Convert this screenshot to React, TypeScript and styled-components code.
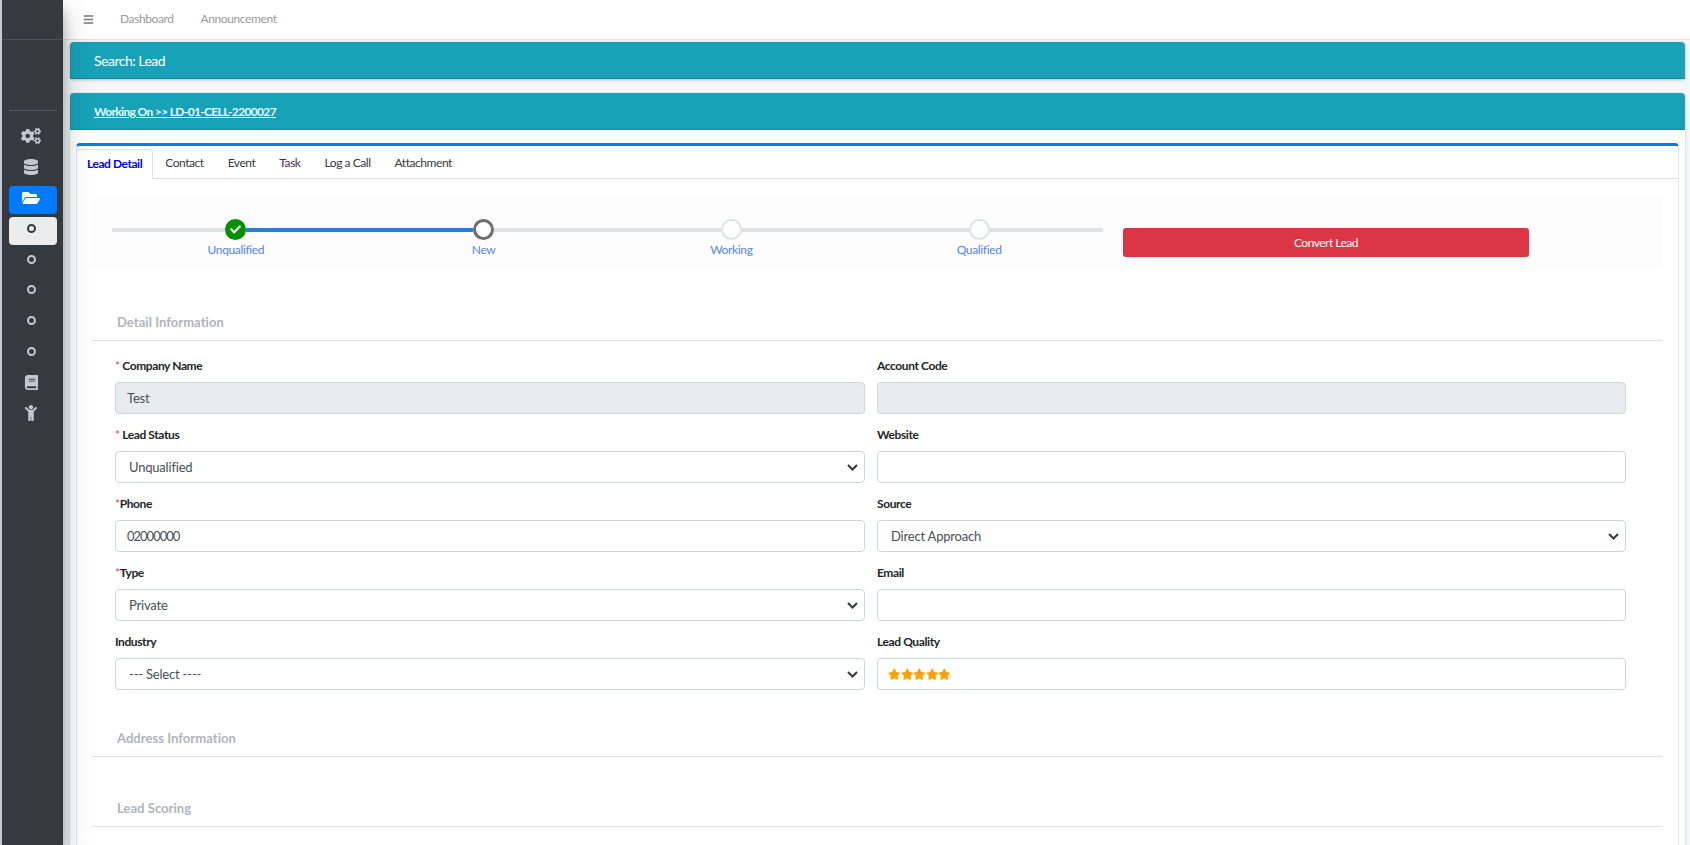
import React from "react";
import styled, {createGlobalStyle} from "styled-components";
import {FaBars, FaBook, FaCheck, FaChild, FaCogs, FaDatabase, FaFolderOpen, FaStar} from "react-icons/fa";

const GlobalStyle = createGlobalStyle`
    html, body {
        margin: 0;
        padding: 0;
        height: 100%;
        overflow: hidden;
    }
    * {
        box-sizing: border-box;
    }
    body {
        font-family: Lato, "Noto Sans", sans-serif;
        font-size: 13px;
        color: #212529;
    }
`;

const Page = styled.div`
    display: flex;
    width: 1690px;
    height: 845px;
    overflow: hidden;
    background: #f4f6f9;
`;

const Sidebar = styled.aside`
    position: relative;
    z-index: 2;
    flex: 0 0 63px;
    border-left: 2px solid #c6cbd3;
    background: #343a40;
    box-shadow: 0 14px 28px rgba(0, 0, 0, 0.25), 0 10px 10px rgba(0, 0, 0, 0.22);
`;

const Brand = styled.div`
    height: 40px;
    border-bottom: 1px solid #4b545c;
`;

const UserPanel = styled.div`
    height: 71px;
    margin: 0 6px 0 7px;
    border-bottom: 1px solid #4f5962;
`;

const SideNav = styled.nav`
    display: flex;
    flex-direction: column;
    gap: 2.8px;
    margin-top: 11px;
    padding: 0 6px 0 7px;
`;

const SideItem = styled.div<{ $tone?: "primary" | "light" }>`
    display: flex;
    align-items: center;
    height: 28px;
    padding-left: 12px;
    border-radius: 4px;
    color: ${p => p.$tone === "primary" ? "#ffffff" : p.$tone === "light" ? "#343a40" : "#c2c7d0"};
    background: ${p => p.$tone === "primary" ? "#007bff" : p.$tone === "light" ? "#ececec" : "transparent"};
    ${p => p.$tone ? "margin: 2.6px 0 -2.6px; padding-bottom: 5.2px;" : ""}
`;

const SideIcon = styled.span`
    display: flex;
    justify-content: center;
    width: 20px;
`;

const Ring = styled.span`
    display: block;
    width: 9px;
    height: 9px;
    border: 2.5px solid currentColor;
    border-radius: 50%;
`;

const Main = styled.main`
    flex: 1;
    min-width: 0;
`;

const Navbar = styled.header`
    display: flex;
    align-items: center;
    height: 40px;
    padding-left: 20px;
    background: #ffffff;
    border-bottom: 1px solid #dee2e6;
    color: #777777;
`;

const NavLinks = styled.div`
    display: flex;
    gap: 27px;
    margin: -2px 0 0 26px;
`;

const NavLink = styled.a`
    font-size: 12px;
    letter-spacing: -0.4px;
    color: #9a9a9a;
`;

const Content = styled.div`
    padding: 2px 5px 0 7px;
`;

const TealBar = styled.div`
    display: flex;
    align-items: center;
    height: 37px;
    padding-left: 24px;
    border-radius: 4px 4px 0 0;
    border-bottom: 1px solid #148a9d;
    background: #17a2b8;
    color: #ffffff;
`;

const SearchCard = styled.section`
    margin-bottom: 14px;
    border-radius: 4px;
    box-shadow: 0 1px 3px rgba(0, 0, 0, 0.25);
    font-size: 14px;
    letter-spacing: -0.5px;
`;

const WorkingCard = styled.section`
    border-radius: 4px 4px 0 0;
    background: #ffffff;
    box-shadow: 0 0 1px rgba(0, 0, 0, 0.2), 0 1px 3px rgba(0, 0, 0, 0.15);
`;

const WorkingLink = styled.a`
    font-size: 12px;
    font-weight: 700;
    letter-spacing: -0.65px;
    text-decoration: underline;
    color: #e8f7fa;
`;

const WorkingBody = styled.div`
    padding: 13px 6px 0;
    height: 716px;
`;

const TabCard = styled.div`
    height: 100%;
    border: 1px solid #e3e6ea;
    border-top: 3px solid #007bff;
    border-bottom: none;
    border-radius: 4px 4px 0 0;
    background: #ffffff;
`;

const TabRow = styled.div`
    display: flex;
    height: 33px;
    padding-top: 3px;
    border-bottom: 1px solid #dee2e6;
`;

const Tab = styled.div<{ $active?: boolean; $color?: string }>`
    display: flex;
    align-items: center;
    height: ${p => p.$active ? "30px" : "29px"};
    margin-left: ${p => p.$active ? "-1px" : "0"};
    padding: 0 ${p => p.$active ? "10px" : "12px"} 2px;
    font-size: 12px;
    font-weight: ${p => p.$active ? 700 : 400};
    letter-spacing: -0.45px;
    color: ${p => p.$active ? "#0000ee" : p.$color || "#343a40"};
    background: #ffffff;
    border: ${p => p.$active ? "1px solid #dee2e6" : "none"};
    border-bottom: none;
    border-radius: 4px 4px 0 0;
`;

const TabBody = styled.div`
    padding: 18px 16px 0 15px;
`;

const StepPanel = styled.div`
    display: flex;
    align-items: flex-start;
    height: 72px;
    padding: 22px 0 0 20px;
    background: #fcfcfd;
`;

const Stepper = styled.div`
    display: flex;
    width: 991px;
`;

const Step = styled.div`
    flex: 1;
    display: flex;
    flex-direction: column;
    align-items: center;
`;

const StepTrack = styled.div`
    display: flex;
    align-items: center;
    width: 100%;
`;

const Segment = styled.div<{ $done?: boolean }>`
    flex: 1;
    height: 4px;
    margin-top: 1px;
    background: ${p => p.$done ? "#2680d9" : "#e0e3e3"};
`;

const StepDot = styled.div<{ $state: "done" | "current" | "todo" }>`
    display: flex;
    align-items: center;
    justify-content: center;
    width: 21px;
    height: 21px;
    border-radius: 50%;
    color: #ffffff;
    background: ${p => p.$state === "done" ? "#009000" : "#ffffff"};
    border: ${p => p.$state === "done" ? "none" : p.$state === "current" ? "3px solid #6e6e6e" : "2px solid #dfe3e3"};
`;

const StepLabel = styled.div`
    margin-top: 2px;
    line-height: 16px;
    font-size: 12px;
    letter-spacing: -0.35px;
    color: #5585f0;
`;

const ConvertButton = styled.button`
    width: 406px;
    height: 29px;
    margin: 9px 0 0 20px;
    border: none;
    border-radius: 3px;
    background: #dc3545;
    color: #ffffff;
    font-family: inherit;
    font-size: 12px;
    letter-spacing: -0.5px;
`;

const SectionTitle = styled.h3<{ $top: number }>`
    margin: ${p => p.$top}px 0 0;
    padding: 0 0 8px 25px;
    line-height: 20px;
    font-size: 13px;
    font-weight: 700;
    letter-spacing: 0.05px;
    color: #adb5bd;
    border-bottom: 1px solid #dee2e6;
`;

const FormGrid = styled.div`
    display: grid;
    grid-template-columns: 750px 749px;
    column-gap: 12px;
    row-gap: 12px;
    padding: 16px 0 0 23px;
`;

const Field = styled.div`
    display: flex;
    flex-direction: column;
    gap: 7px;
`;

const Label = styled.label`
    line-height: 18px;
    font-size: 12px;
    font-weight: 700;
    letter-spacing: -0.4px;
    color: #212529;
`;

const Required = styled.span`
    color: #e0446a;
    font-weight: 400;
`;

const TextInput = styled.input<{ $tight?: boolean }>`
    height: 32px;
    padding: 0 11px;
    border: 1px solid #ced4da;
    border-radius: 4px;
    outline: none;
    font-family: inherit;
    font-size: 13px;
    letter-spacing: ${p => p.$tight ? "-1px" : "-0.2px"};
    color: #495057;
    background: ${p => p.disabled ? "#e9ecef" : "#ffffff"};
`;

const SelectInput = styled.select`
    appearance: none;
    height: 32px;
    padding: 0 24px 0 13px;
    border: 1px solid #ced4da;
    border-radius: 4px;
    outline: none;
    font-family: inherit;
    font-size: 13px;
    letter-spacing: -0.2px;
    color: #495057;
    background: #ffffff url("data:image/svg+xml,%3Csvg xmlns='http://www.w3.org/2000/svg' width='11' height='7' viewBox='0 0 11 7'%3E%3Cpath d='M1 1l4.5 4.5L10 1' fill='none' stroke='%23343a40' stroke-width='2'/%3E%3C/svg%3E") no-repeat right 6px center;
`;

const RatingBox = styled.div`
    display: flex;
    align-items: center;
    height: 32px;
    padding-left: 10px;
    border: 1px solid #ced4da;
    border-radius: 4px;
    color: #ffa000;
`;

function Star() {
    return <FaStar size={12.5}/>;
}

const STEPS = [
    {label: "Unqualified", state: "done"},
    {label: "New", state: "current"},
    {label: "Working", state: "todo"},
    {label: "Qualified", state: "todo"},
] as const;

const TABS = ["Contact", "Event", "Task", "Log a Call", "Attachment"];

function LeadStepper() {
    return (
        <StepPanel>
            <Stepper>
                {STEPS.map((step, i) => (
                    <Step key={step.label}>
                        <StepTrack>
                            <Segment $done={i === 1}/>
                            <StepDot $state={step.state}>
                                {step.state === "done" && <FaCheck size={11}/>}
                            </StepDot>
                            <Segment $done={i === 0}/>
                        </StepTrack>
                        <StepLabel>{step.label}</StepLabel>
                    </Step>
                ))}
            </Stepper>
            <ConvertButton>Convert Lead</ConvertButton>
        </StepPanel>
    );
}

function LeadForm() {
    return (
        <FormGrid>
            <Field>
                <Label><Required>*</Required> Company Name</Label>
                <TextInput disabled defaultValue="Test"/>
            </Field>
            <Field>
                <Label>Account Code</Label>
                <TextInput disabled/>
            </Field>
            <Field>
                <Label><Required>*</Required> Lead Status</Label>
                <SelectInput defaultValue="Unqualified">
                    <option>Unqualified</option>
                </SelectInput>
            </Field>
            <Field>
                <Label>Website</Label>
                <TextInput/>
            </Field>
            <Field>
                <Label><Required>*</Required>Phone</Label>
                <TextInput $tight defaultValue="02000000"/>
            </Field>
            <Field>
                <Label>Source</Label>
                <SelectInput defaultValue="Direct Approach">
                    <option>Direct Approach</option>
                </SelectInput>
            </Field>
            <Field>
                <Label><Required>*</Required>Type</Label>
                <SelectInput defaultValue="Private">
                    <option>Private</option>
                </SelectInput>
            </Field>
            <Field>
                <Label>Email</Label>
                <TextInput/>
            </Field>
            <Field>
                <Label>Industry</Label>
                <SelectInput defaultValue="--- Select ----">
                    <option>--- Select ----</option>
                </SelectInput>
            </Field>
            <Field>
                <Label>Lead Quality</Label>
                <RatingBox>
                    <Star/><Star/><Star/><Star/><Star/>
                </RatingBox>
            </Field>
        </FormGrid>
    );
}

function SideMenu() {
    return (
        <Sidebar>
            <Brand/>
            <UserPanel/>
            <SideNav>
                <SideItem><SideIcon><FaCogs size={20}/></SideIcon></SideItem>
                <SideItem><SideIcon><FaDatabase size={16}/></SideIcon></SideItem>
                <SideItem $tone="primary"><SideIcon><FaFolderOpen size={18}/></SideIcon></SideItem>
                <SideItem $tone="light"><SideIcon><Ring/></SideIcon></SideItem>
                <SideItem><SideIcon><Ring/></SideIcon></SideItem>
                <SideItem><SideIcon><Ring/></SideIcon></SideItem>
                <SideItem><SideIcon><Ring/></SideIcon></SideItem>
                <SideItem><SideIcon><Ring/></SideIcon></SideItem>
                <SideItem><SideIcon><FaBook size={15}/></SideIcon></SideItem>
                <SideItem><SideIcon><FaChild size={16}/></SideIcon></SideItem>
            </SideNav>
        </Sidebar>
    );
}

export default function App() {
    return (
        <Page>
            <GlobalStyle/>
            <SideMenu/>
            <Main>
                <Navbar>
                    <FaBars size={11}/>
                    <NavLinks>
                        <NavLink>Dashboard</NavLink>
                        <NavLink>Announcement</NavLink>
                    </NavLinks>
                </Navbar>
                <Content>
                    <SearchCard>
                        <TealBar>Search: Lead</TealBar>
                    </SearchCard>
                    <WorkingCard>
                        <TealBar>
                            <WorkingLink>Working On &gt;&gt; LD-01-CELL-2200027</WorkingLink>
                        </TealBar>
                        <WorkingBody>
                            <TabCard>
                                <TabRow>
                                    <Tab $active>Lead Detail</Tab>
                                    {TABS.map(tab => (
                                        <Tab key={tab} $color={tab === "Task" ? "#4f2a66" : undefined}>{tab}</Tab>
                                    ))}
                                </TabRow>
                                <TabBody>
                                    <LeadStepper/>
                                    <SectionTitle $top={43}>Detail Information</SectionTitle>
                                    <LeadForm/>
                                    <SectionTitle $top={38}>Address Information</SectionTitle>
                                    <SectionTitle $top={41}>Lead Scoring</SectionTitle>
                                </TabBody>
                            </TabCard>
                        </WorkingBody>
                    </WorkingCard>
                </Content>
            </Main>
        </Page>
    );
}
